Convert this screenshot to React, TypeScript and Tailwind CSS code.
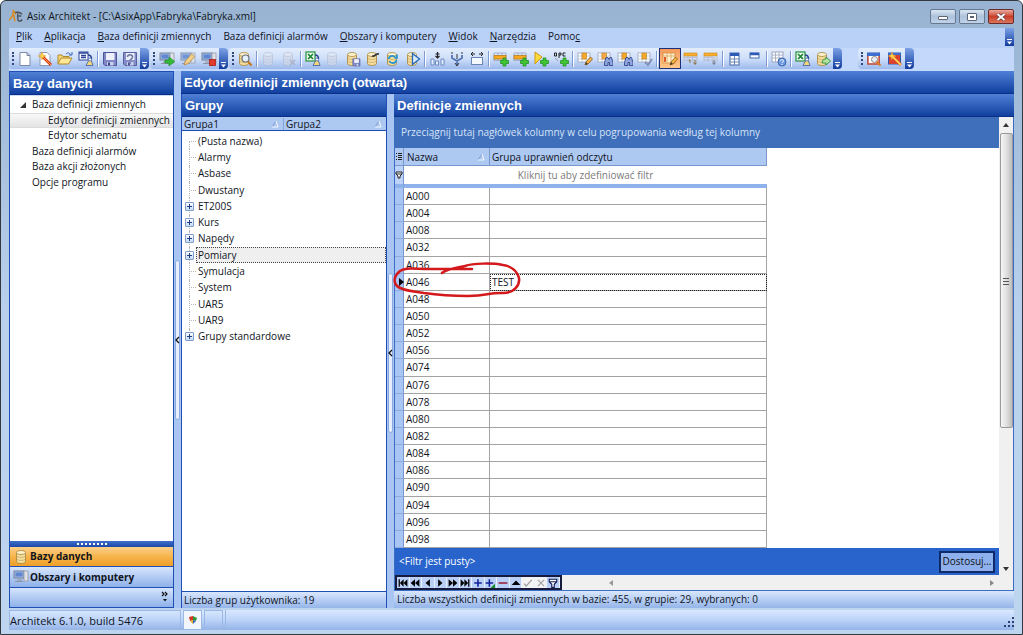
import React from 'react';
import clsx from 'clsx';

type IconProps = { children: React.ReactNode; className?: string };

const Icon = ({ children, className = 'size-4' }: IconProps) => (
  <svg viewBox="0 0 16 16" className={clsx('shrink-0', className)} aria-hidden="true">{children}</svg>
);

/* Shared icon parts */
const Cylinder = ({ fill = '#f3dc9c', line = '#a8853a', top = '#fdf3cf' }) => (
  <g fill={fill} stroke={line} strokeWidth=".8">
    <path d="M2.5 3.5v9c0 1.2 2 2 4.5 2s4.500-.8 4.500-2v-9z" />
    <ellipse cx="7" cy="3.500" rx="4.500" ry="2" fill={top} />
    <path d="M2.500 6.500c0 1.200 2 2 4.500 2s4.500-.8 4.500-2M2.500 9.500c0 1.200 2 2 4.500 2s4.500-.8 4.500-2" fill="none" opacity=".5" />
  </g>
);

const GreyCylinder = () => <g opacity=".6"><Cylinder fill="#d3d9e6" line="#a9b3c9" top="#e4e8f1" /></g>;

const Plus = () => <path d="M10 7h3v2.500h2.500v3h-2.500v2.500h-3v-2.500h-2.500v-3h2.500z" fill="#3fc433" stroke="#1d8a1a" strokeWidth=".7" />;

const Sheet = ({ header = '#f2a92c' }) => (
  <g>
    <rect x="1" y="2" width="12" height="9" fill="#fff" stroke="#9aa3bd" strokeWidth=".8" />
    <path d="M1 5h12M1 8h12M5 2v9M9 2v9" stroke="#b6bccd" strokeWidth=".8" />
    <rect x="5" y="2" width="4.500" height="6" fill={header} stroke="#c98116" strokeWidth=".6" />
  </g>
);

const Pencil = () => (
  <g>
    <path d="M8 14l1-3 4.500-5 2 2-4.500 5z" fill="#f7b545" stroke="#8a5a18" strokeWidth=".8" />
    <path d="M8 14l1-3 2 2z" fill="#4a3a28" />
  </g>
);

const Binoculars = () => (
  <path d="M7.500 14.500v-3l1.500-5h2l1 2 1-2h1.500l1.500 5v3h-3.500v-3h-1.500v3z" fill="#8fa5dd" stroke="#34468b" strokeWidth=".9" />
);

const RowArrow = () => (
  <g>
    <rect x="1" y="2" width="13" height="3" fill="#f7b02f" stroke="#c98116" strokeWidth=".6" />
    <path d="M1 6.500h13M1 9h13M1 5v6M5 5v6M9.500 5v6M14 5v6" stroke="#b0b7ca" strokeWidth=".8" />
  </g>
);

/* Grid with one highlighted row, used by the insert tools */
const MarkedRow = () => (
  <g>
    <path d="M1 2h12M1 5h12M1 9.500h12M1 2v8M5 2v8M9 2v8M13 2v8" stroke="#9aa6c4" strokeWidth=".8" />
    <rect x="1" y="4.500" width="12" height="3.500" fill="#f9a91c" stroke="#b87a15" strokeWidth=".7" />
  </g>
);

const Server = () => (
  <g>
    <rect x="1" y="2" width="10" height="7" fill="#9db8e8" stroke="#7b8397" />
    <rect x="2.500" y="3.500" width="7" height="4" fill="#5f86cf" />
    <path d="M4 11h5M2 12.500h8" stroke="#8d93a3" />
    <rect x="11" y="2" width="4" height="10" fill="#dfe1e6" stroke="#9499a5" strokeWidth=".8" />
  </g>
);

const Excel = () => (
  <g>
    <rect x="1" y="1" width="9" height="9" fill="#eefaee" stroke="#23903a" strokeWidth="1.200" />
    <path d="M3 3l5 5M8 3l-5 5" stroke="#178232" strokeWidth="1.700" />
  </g>
);

const Person = () => (
  <g>
    <path d="M10 4c3 0 3.500 1.500 3.500 4" fill="none" stroke="#25418f" strokeWidth="1.500" />
    <path d="M13 8.500l2 6h-7l2-4z" fill="#f3d776" stroke="#3d5aa8" strokeWidth=".8" />
    <circle cx="12" cy="8.500" r="1.500" fill="#fff" stroke="#3d5aa8" strokeWidth=".7" />
  </g>
);

const Floppy = () => (
  <g>
    <path d="M1.500 1.500h13v13h-11.500l-1.500-1.500z" fill="#7f86c6" stroke="#4c5396" />
    <rect x="4" y="2" width="8.500" height="7" fill="#edf0fb" />
    <rect x="5" y="11" width="6.500" height="3.500" fill="#c9cfea" />
    <rect x="6" y="11.500" width="2" height="3" fill="#3c4389" />
  </g>
);

const Calendar = () => (
  <g>
    <rect x="1.500" y="2" width="12" height="11" fill="#fff" stroke="#2e56ae" />
    <rect x="1.500" y="2" width="12" height="3" fill="#3c6fd0" />
  </g>
);

const Wand = () => (
  <g>
    <path d="M5 5l9 9" stroke="#d93718" strokeWidth="2.600" />
    <path d="M5 5l9 9" stroke="#f8a23c" strokeWidth="1" />
    <path d="M5 1l1 3 3 1-3 1-1 3-1-3-3-1 3-1z" fill="#ffd54a" stroke="#e0911b" strokeWidth=".5" />
  </g>
);

const fileTools = [
  { label: 'Nowy', icon: <path d="M3 1.500h7l3 3v10h-10zM10 1.500v3h3" fill="#fff" stroke="#7f8aa3" /> },
  { label: 'Kreator', icon: <g><path d="M3 1.500h7l3 3v10h-10z" fill="#fff" stroke="#8f98ad" /><Wand /></g> },
  { label: 'Otwórz', icon: <g><path d="M1 13v-9h4l1 1.500h6v2" fill="#f8d978" stroke="#b08a2a" /><path d="M1 13l3-6h11l-3.500 6z" fill="#ffe796" stroke="#b08a2a" /><path d="M9 3c2-2 4-1 4.500 1M12 4h3v-3" fill="none" stroke="#3865b8" /></g> },
  { label: 'Import', icon: <g><rect x="1" y="1" width="9" height="8" fill="#fff" stroke="#2a449b" /><path d="M1 2h9M3 4.500h5M3 6.500h5" stroke="#2a449b" strokeWidth="1.300" /><Person /></g> },
  'sep',
  { label: 'Zapisz', icon: <Floppy /> },
  { label: 'Zapisz jako', icon: <g opacity=".9"><Floppy /><path d="M5.500 6c0-3 5-3 5 0 0 2-2.500 2-2.500 3.500M8 11v2" fill="none" stroke="#666c92" strokeWidth="1.500" /></g> },
] as const;

const serverTools = [
  { label: 'Uruchom', icon: <g><Server /><path d="M6 9h4v-3l5.500 4.500-5.500 4.500v-3h-4z" fill="#36bd38" stroke="#178a20" strokeWidth=".7" /></g> },
  { label: 'Edytuj', icon: <g opacity=".85"><Server /><path d="M4 14l1.500-4 6-7 3 2.500-6 7z" fill="#f8cf78" stroke="#b6802a" strokeWidth=".8" /></g> },
  { label: 'Zatrzymaj', icon: <g><Server /><rect x="8.500" y="8.500" width="6" height="6" fill="#e33a2e" stroke="#a81d18" strokeWidth=".8" /></g> },
] as const;

const baseTools = [
  { label: 'Podgląd bazy', icon: <g><Cylinder /><circle cx="8.500" cy="7.500" r="3.500" fill="#e5f1ff" stroke="#6b6f7c" strokeWidth="1.200" /><path d="M11 10.500l3.500 4" stroke="#c8781c" strokeWidth="2" /></g> },
  'sep',
  { label: 'Baza', icon: <GreyCylinder /> },
  { label: 'Usuń bazę', icon: <g><GreyCylinder /><path d="M9 9l5 5M14 9l-5 5" stroke="#a9b3c9" strokeWidth="1.500" /></g> },
  'sep',
  { label: 'Import z Excela', icon: <g><Excel /><Person /></g> },
  { label: 'Sprawdź bazę', icon: <GreyCylinder /> },
  { label: 'Zapisz bazę', icon: <g><Cylinder /><g transform="translate(7 7) scale(.55)"><Floppy /></g></g> },
  { label: 'Modyfikuj bazę', icon: <g><Cylinder /><path d="M7 5c3 1 4-3 7-2" fill="none" stroke="#3a3a3a" strokeWidth="1.800" /></g> },
  { label: 'Odśwież bazę', icon: <g><Cylinder /><path d="M3.500 8c1-4 6-4 7-1h1.500v-3.500M11.500 9c-1 4-6 4-7 1" fill="none" stroke="#2597d1" strokeWidth="1.700" /></g> },
  { label: 'Generuj', icon: <g><Cylinder /><path d="M7.500 2.500l7 5.500-7 5.500z" fill="#d6ebff" stroke="#2467b8" strokeWidth="1.300" /></g> },
  'sep',
  { label: 'Wstaw', icon: <g><path d="M2 8h3v6h-3zM6.500 10h3v4h-3zM12 8h3v6h-3z" fill="#e6efff" stroke="#6c88c2" /><path d="M8.500 1v6M6.500 3h4M6.500 5l2 2 2-2" fill="none" stroke="#222" strokeWidth="1.200" /></g> },
  { label: 'Połącz', icon: <g><path d="M3 4v3l5 3 5-3v-3M8 9v5" fill="none" stroke="#5373b2" strokeWidth="1.800" /><path d="M8 3v5M3 1v2M13 1v2M6 12l2 3 2-3" fill="none" stroke="#333" /></g> },
  { label: 'Rozciągnij', icon: <g><rect x="2.500" y="6.500" width="11" height="7" fill="#f4f8ff" stroke="#6c85b5" /><path d="M2 3h4M10 3h4M4 1l-2 2 2 2M12 1l2 2-2 2" fill="none" stroke="#222" /></g> },
  'sep',
  { label: 'Dodaj wiersz', icon: <g><MarkedRow /><Plus /></g> },
  { label: 'Dodaj wiersze', icon: <g><MarkedRow /><Plus /></g> },
  { label: 'Dodaj zmienną', icon: <g><path d="M2 1l7 5-7 7z" fill="#ffd83b" stroke="#cf9a15" /><Plus /></g> },
  { label: 'Dodaj OPC', icon: <g><path d="M1.500 2h2v3h-2zM6 7v-5h2v2h-2M12.500 2h-2.500v3h2.500" fill="none" stroke="#222" /><path d="M2 7l3 3" stroke="#999" /><Plus /></g> },
  'sep',
  { label: 'Edytuj kolumnę', icon: <g><Sheet /><Pencil /></g> },
  { label: 'Szukaj', icon: <g><Sheet header="#f3a94c" /><Binoculars /></g> },
  { label: 'Szukaj dalej', icon: <g><Sheet /><Binoculars /></g> },
  { label: 'Zaznacz', icon: <g><Sheet /><path d="M8 11l3 3 4-6" fill="none" stroke="#8190b8" strokeWidth="2" /></g> },
  'sep',
  { label: 'Tryb edycji', active: true, icon: <g><rect x="1" y="2" width="12" height="10" fill="#fff0cf" stroke="#d08a3b" strokeWidth=".8" /><path d="M1 5h12M5 2v10M9 2v10" stroke="#d9a25c" strokeWidth=".8" /><path d="M3 6v5" stroke="#e04a1a" strokeWidth="1.800" /><Pencil /></g> },
  { label: 'Wiersz w dół', icon: <g><RowArrow /><path d="M6 9h1v3M12 9v4M10.500 11.500l1.500 2 1.500-2" fill="none" stroke="#8b6a37" /></g> },
  { label: 'Kolumna w dół', icon: <g><RowArrow /><rect x="9.500" y="5" width="4.500" height="4" fill="#c9cfdd" /><path d="M11 9v4M9.500 11.500l1.500 2 1.500-2" fill="none" stroke="#6e7381" /></g> },
  'sep',
  { label: 'Karta', icon: <g><rect x="3" y="2" width="9" height="12" fill="#fff" stroke="#4568ab" /><path d="M3 3.500h9" stroke="#2c5ab8" strokeWidth="3" /><path d="M3 8h9M3 11h9M7.500 5v9" stroke="#6b85b8" /></g> },
  { label: 'Pasek', icon: <g><rect x="3" y="2" width="9" height="5" fill="#fff" stroke="#4568ab" /><path d="M3 3h9" stroke="#2c5ab8" strokeWidth="2.500" /></g> },
  'sep',
  { label: 'Filtr', icon: <g><rect x="1" y="1" width="11" height="10" fill="#fff" stroke="#9aa3bd" /><path d="M1 4h11M1 7h11M4.500 1v10M8 1v10" stroke="#aab2c6" /><circle cx="11" cy="11" r="4" fill="#6f9be0" stroke="#3b65ae" /><path d="M9.500 10c0-2 3-2 3 0 0 1-1.500 1-1.500 2M11 13v1" fill="none" stroke="#fff" /></g> },
  'sep',
  { label: 'Eksport do Excela', icon: <g><Excel /><Person /></g> },
  { label: 'Eksport bazy', icon: <g><Cylinder /><path d="M7 12c0-3 2-4 4-4v-2l4.500 4-4.500 4v-2z" fill="#b4e2a4" stroke="#3d9440" /></g> },
] as const;

const viewTools = [
  { label: 'Wyszukaj', icon: <g><Calendar /><path d="M2 5v8h11v-8" fill="none" stroke="#dd5a3c" strokeWidth="1.500" /><circle cx="8.500" cy="8.500" r="3" fill="#e1efff" stroke="#9a8173" /><path d="M10.500 10.500l4 4" stroke="#d97823" strokeWidth="2" /></g> },
  { label: 'Konfiguruj', icon: <g><Calendar /><rect x="2" y="4" width="11" height="9" fill="#d9422e" /><Wand /><path d="M6 6l8 8" stroke="#ffd25c" strokeWidth="1.800" /></g> },
] as const;

type Tool = 'sep' | { label: string; icon: React.ReactNode; active?: boolean };

const MoreButton = ({ label }: { label: string }) => (
  <button aria-label={label} className="flex w-[9px] shrink-0 items-end justify-center bg-gradient-to-b from-[#7da2e6] to-[#123a9e] pb-px">
    <svg viewBox="0 0 7 7" className="size-[7px]" aria-hidden="true">
      <path d="M1 1.500h5" stroke="#fff" /><path d="M1 3.500h5l-2.500 3z" fill="#fff" />
    </svg>
  </button>
);

const Toolbar = ({ tools, className, label }: { tools: readonly Tool[]; className: string; label: string }) => (
  <div role="toolbar" aria-label={label} className={clsx('flex h-[21px] overflow-hidden rounded-sm bg-gradient-to-b from-[#e3edfd] via-[#cfdff9] to-[#9dbaec]', className)}>
    <span className="my-1 ml-[3px] w-[3px] shrink-0 border-l-2 border-dotted border-[#30477c]" />
    <div className="flex min-w-0 flex-1 items-center">
      {tools.map((tool, i) => tool === 'sep' ? (
        <span key={i} className="mx-px h-4 w-[2px] shrink-0 border-l border-r border-l-[#7c9bd4] border-r-white" />
      ) : (
        <button
          key={i}
          aria-label={tool.label}
          className={clsx('flex h-full min-w-0 flex-1 items-center justify-center', tool.active && 'border border-[#1c2e7a] bg-gradient-to-b from-[#f59a5c] to-[#ffc98a]')}
        >
          <Icon>{tool.icon}</Icon>
        </button>
      ))}
    </div>
    <MoreButton label={`${label}: więcej`} />
  </div>
);

const menu = [
  ['', 'P', 'lik'],
  ['', 'A', 'plikacja'],
  ['', 'B', 'aza definicji zmiennych'],
  ['Baza definicji alarmów', '', ''],
  ['', 'O', 'bszary i komputery'],
  ['', 'W', 'idok'],
  ['', 'N', 'arzędzia'],
  ['Pomo', 'c', ''],
];

const navigation = [
  { name: 'Baza definicji zmiennych', open: true },
  { name: 'Edytor definicji zmiennych', child: true, selected: true },
  { name: 'Edytor schematu', child: true },
  { name: 'Baza definicji alarmów' },
  { name: 'Baza akcji złożonych' },
  { name: 'Opcje programu' },
];

const groups = [
  { name: '(Pusta nazwa)' },
  { name: 'Alarmy' },
  { name: 'Asbase' },
  { name: 'Dwustany' },
  { name: 'ET200S', expandable: true },
  { name: 'Kurs', expandable: true },
  { name: 'Napędy', expandable: true },
  { name: 'Pomiary', expandable: true, selected: true },
  { name: 'Symulacja' },
  { name: 'System' },
  { name: 'UAR5' },
  { name: 'UAR9' },
  { name: 'Grupy standardowe', expandable: true },
];

const variables = [
  'A000', 'A004', 'A008', 'A032', 'A036', 'A046', 'A048', 'A050', 'A052', 'A056', 'A074',
  'A076', 'A078', 'A080', 'A082', 'A084', 'A086', 'A090', 'A094', 'A096', 'A098',
];

const TitleBar = () => (
  <header className="flex h-[27px] shrink-0 items-start justify-between">
    <div className="flex h-full items-center gap-1 pt-[3px]">
      <svg viewBox="0 0 16 16" className="size-[14px]" aria-hidden="true">
        <path d="M0 13l4-5 1-6 3 4M5 6l2 8" fill="none" stroke="#d8891f" strokeWidth="1.700" />
        <path d="M7 4c5-1 5 0 8 2M10 5v6c0 3 3 4 5 1M11 8h3" fill="none" stroke="#4a4f59" strokeWidth="1.600" />
      </svg>
      <h1>Asix Architekt - [C:\AsixApp\Fabryka\Fabryka.xml]</h1>
    </div>
    <div className="flex gap-[3px] pt-2">
      <button aria-label="Minimalizuj" className="flex h-[15px] w-[26px] items-end justify-center rounded-xs border border-[#65788f] bg-gradient-to-b from-[#dbe6f3] via-[#adc2dc] to-[#bfd2e8] pb-[3px]">
        <span className="h-1 w-[10px] rounded-[1px] border border-[#5d6472] bg-white" />
      </button>
      <button aria-label="Maksymalizuj" className="flex h-[15px] w-[26px] items-center justify-center rounded-xs border border-[#65788f] bg-gradient-to-b from-[#dbe6f3] via-[#adc2dc] to-[#bfd2e8]">
        <span className="flex h-2 w-[10px] items-center justify-center rounded-[1px] border border-[#5d6472] bg-white">
          <span className="h-[2px] w-1 bg-[#5d6472]" />
        </span>
      </button>
      <button aria-label="Zamknij" className="flex h-[15px] w-[26px] items-center justify-center rounded-xs border border-[#6b2a2c] bg-gradient-to-b from-[#e9a99d] via-[#c93f2b] to-[#d9745a]">
        <svg viewBox="0 0 10 8" className="h-2 w-[10px]" aria-hidden="true">
          <path d="M1.500 1l7 6M8.500 1l-7 6" stroke="#50343a" strokeWidth="3.200" />
          <path d="M1.500 1l7 6M8.500 1l-7 6" stroke="#fff" strokeWidth="2" />
        </svg>
      </button>
    </div>
  </header>
);

const PanelTitle = ({ children }: { children: React.ReactNode }) => (
  <h2 className="flex h-[23px] shrink-0 items-center border-b border-[#0b2f86] bg-gradient-to-b from-[#4f80d6] to-[#103f9f] pl-[3px] font-['Liberation_Sans',sans-serif] text-[13px] font-bold text-white">
    {children}
  </h2>
);

const Splitter = ({ className }: { className: string }) => (
  <div className={clsx('flex w-[7px] shrink-0 flex-col bg-[#a9c5f1]', className)}>
    <button aria-label="Zwiń panel" className="mx-px flex h-[160px] items-center justify-center rounded-sm border border-[#8ba9dc] bg-[#e6effd]">
      <svg viewBox="0 0 5 8" className="h-2 w-[5px] shrink-0" aria-hidden="true">
        <path d="M4 1l-3 3 3 3" fill="none" stroke="#111" strokeWidth="1.300" />
      </svg>
    </button>
  </div>
);

const SidePanel = () => (
  <aside className="flex w-[165px] shrink-0 flex-col border border-[#1f4fb5] bg-white">
    <PanelTitle>Bazy danych</PanelTitle>
    <nav className="flex-1 border-t border-[#c9daf5] pt-px">
      <ul className="grid h-[93px] auto-rows-fr">
        {navigation.map((item) => (
          <li key={item.name} className={clsx('flex min-h-0 items-center', item.selected && 'border-y border-[#dcdcdc] bg-gradient-to-b from-[#f8f8f8] to-[#e4e4e4]')}>
            <span className={clsx('shrink-0', item.child ? 'w-[38px]' : 'w-[22px]')}>
              {item.open && (
                <svg viewBox="0 0 6 6" className="ml-[10px] size-[6px]" aria-hidden="true"><path d="M6 0v6h-6z" fill="#333" /></svg>
              )}
            </span>
            <a href="#" className="whitespace-nowrap">{item.name}</a>
          </li>
        ))}
      </ul>
    </nav>
    <div className="flex h-[6px] shrink-0 items-center justify-center bg-gradient-to-b from-[#3e6fcb] to-[#1c48a6]">
      <span className="w-[30px] border-t-2 border-dotted border-white" />
    </div>
    <button className="flex h-5 shrink-0 items-center gap-px border-b border-[#1f4fb5] bg-gradient-to-b from-[#fbd08a] via-[#f6b44a] to-[#ee9f28] pl-[3px] font-bold">
      <Icon><g transform="translate(1 0)"><Cylinder /></g></Icon>
      Bazy danych
    </button>
    <button className="flex h-[21px] shrink-0 items-center gap-px border-b border-[#1f4fb5] bg-gradient-to-b from-[#d6e5fc] to-[#8fb1ea] pl-[3px] font-bold">
      <Icon><Server /></Icon>
      Obszary i komputery
    </button>
    <div className="flex h-[19px] shrink-0 justify-end bg-gradient-to-b from-[#d6e5fc] to-[#8fb1ea] pt-[3px] pr-1">
      <button aria-label="Konfiguruj przyciski" className="h-3">
        <svg viewBox="0 0 8 12" className="h-3 w-2" aria-hidden="true">
          <path d="M1 1l2 2-2 2M4 1l2 2-2 2" fill="none" stroke="#111" strokeWidth="1.200" /><path d="M2 8h4l-2 2.500z" fill="#111" />
        </svg>
      </button>
    </div>
  </aside>
);

const SortMark = () => (
  <svg viewBox="0 0 8 8" className="size-2 shrink-0" aria-hidden="true">
    <path d="M1 7l4-6" fill="none" stroke="#7f9bcd" /><path d="M5 1l2 6h-6" fill="none" stroke="#f4f8ff" />
  </svg>
);

const GroupsPanel = () => (
  <section className="flex w-[206px] shrink-0 flex-col border-x border-[#1f4fb5] bg-white">
    <PanelTitle>Grupy</PanelTitle>
    <div className="flex h-[14px] shrink-0 overflow-hidden border-b border-[#1f4fb5] bg-[#adc8f1] pt-px">
      <div className="flex w-[102px] items-center justify-between border-r border-[#86a5dc] pr-1 pl-[2px]"><span>Grupa1</span><SortMark /></div>
      <div className="flex flex-1 items-center justify-between pr-1 pl-[2px]"><span>Grupa2</span><SortMark /></div>
    </div>
    <ul className="grid h-[214px] shrink-0 auto-rows-fr pt-[2px]">
      {groups.map((group, i) => (
        <li key={group.name} className="flex min-h-0">
          <span className="relative flex w-[14px] shrink-0 items-center justify-center">
            <span className={clsx('absolute left-[7px] border-l border-dotted border-[#b5b5b5]', i === 0 ? 'top-1/2 bottom-0' : i === groups.length - 1 ? 'top-0 bottom-1/2' : 'inset-y-0')} />
            {group.expandable ? (
              <button aria-label={`Rozwiń ${group.name}`} className="relative flex size-[9px] items-center justify-center rounded-[1px] border border-[#7f9cc9] bg-gradient-to-b from-white to-[#c7d9f5]">
                <svg viewBox="0 0 5 5" className="size-[5px]" aria-hidden="true"><path d="M0 2.500h5M2.500 0v5" stroke="#1d3f86" /></svg>
              </button>
            ) : (
              <span className="ml-[9px] w-[6px] border-t border-dotted border-[#b5b5b5]" />
            )}
          </span>
          <span className={clsx('flex flex-1 items-center border border-dotted pl-px', group.selected ? 'border-[#444] bg-[#efefef]' : 'border-transparent')}>{group.name}</span>
        </li>
      ))}
    </ul>
    <div className="flex-1" />
    <div className="flex h-[17px] shrink-0 items-center border-t border-[#1f4fb5] bg-gradient-to-b from-[#d9e7fd] to-[#95b5ea] pl-[2px]">Liczba grup użytkownika: 19</div>
  </section>
);

/* Hand-drawn ring round the marked row */
const Ring = () => (
  <svg viewBox="0 0 130 36" className="pointer-events-none absolute -top-[12px] -left-[2px] z-10 h-9 w-[130px]" fill="none" stroke="#d3191b" strokeWidth="2.500" strokeLinecap="round" aria-hidden="true">
    <path d="M79 7H38C20 7 13 5 7 9C1 14 0 20 4 24C9 29 20 29 31 31C45 33 55 34 75 34C95 34 93 31 108 31C122 32 127 22 126 16C124 9 118 4 110 3C100 1 80 1 72 4C62 6 53 7 49 11" />
  </svg>
);

const VariablesTable = () => (
  <table className="h-[400px] w-[372px] shrink-0 table-fixed border-separate border-spacing-0 text-left">
    <colgroup><col className="w-[9px]" /><col className="w-[86px]" /><col /></colgroup>
    <thead>
      <tr className="h-[18px] bg-[#adc8f1]">
        <th className="border-r border-b border-[#7897cf] p-0" aria-label="Kolumny">
          <svg viewBox="0 0 8 8" className="size-2" aria-hidden="true"><path d="M3 .5h4M3 2.500h4M3 4.500h4M3 6.500h4M1 .5h1M1 3.500h1M1 6.500h1" stroke="#222" /></svg>
        </th>
        <th className="border-r border-b border-[#7897cf] p-0 font-normal">
          <div className="flex items-center justify-between pt-px pr-1 pl-[3px]">Nazwa<SortMark /></div>
        </th>
        <th className="border-r border-b border-[#7897cf] p-0 pt-px pl-[2px] font-normal">Grupa uprawnień odczytu</th>
      </tr>
      <tr className="h-[22px]">
        <td className="border-r border-b-4 border-r-[#7897cf] border-b-[#8fb2ec] bg-[#bcd2f6] p-0">
          <svg viewBox="0 0 8 8" className="size-2" aria-hidden="true"><path d="M1 1h6v2l-2 2v2h-2v-2l-2-2zM1 3h6" fill="#fff" stroke="#222" /></svg>
        </td>
        <td colSpan={2} className="border-b-4 border-[#8fb2ec] p-0 text-center text-[#7a7a7a]">
          <button className="block w-full leading-[14px]">Kliknij tu aby zdefiniować filtr</button>
        </td>
      </tr>
    </thead>
    <tbody>
      {variables.map((name) => {
        const marked = name === 'A046';
        return (
          <tr key={name}>
            <td className="relative border-r border-b border-r-[#7897cf] border-b-[#8fabdd] bg-[#a9c5f3] p-0">
              {marked && <Ring />}
              {marked && <svg viewBox="0 0 5 8" className="ml-1 h-2 w-[5px]" aria-hidden="true"><path d="M0 0l5 4-5 4z" fill="#000" /></svg>}
            </td>
            <td className="border-r border-b border-[#a3a3a3] p-0 pt-px pl-[2px]">{name}</td>
            <td className={clsx('border-r border-b border-[#a3a3a3] p-0 pt-px pl-[2px]', marked && 'outline-1 -outline-offset-1 outline-dotted outline-[#222]')}>{marked && 'TEST'}</td>
          </tr>
        );
      })}
    </tbody>
  </table>
);

const navigator = [
  { label: 'Pierwszy', icon: <path d="M1 2h2v12h-2zM9 2v12l-6-6zM15 2v12l-6-6z" /> },
  { label: 'Poprzednia strona', icon: <path d="M8 2v12l-7-6zM15 2v12l-7-6z" /> },
  { label: 'Poprzedni', icon: <path d="M11 2v12l-7-6z" /> },
  { label: 'Następny', icon: <path d="M5 2v12l7-6z" /> },
  { label: 'Następna strona', icon: <path d="M1 2v12l7-6zM8 2v12l7-6z" /> },
  { label: 'Ostatni', icon: <path d="M1 2v12l6-6zM7 2v12l6-6zM13 2h2v12h-2z" /> },
  { label: 'Dodaj', icon: <path d="M8 2v12M2 8h12" stroke="#10219b" strokeWidth="2.500" /> },
  { label: 'Dodaj na końcu', icon: <g><path d="M7 2v12M1 8h12" stroke="#10219b" strokeWidth="2.500" /><path d="M16 9v7h-7z" fill="#138a23" /></g> },
  { label: 'Usuń', icon: <path d="M1 8h14" stroke="#9c2035" strokeWidth="2.500" /> },
  { label: 'Edytuj', icon: <path d="M1 11l7-7 7 7z" /> },
  { label: 'Zatwierdź', off: true, icon: <path d="M2 9l3 4 9-10" fill="none" stroke="#9a9a9a" strokeWidth="2" /> },
  { label: 'Anuluj', off: true, icon: <path d="M3 3l10 10M13 3l-10 10" stroke="#a5a5a5" strokeWidth="2" /> },
  { label: 'Filtruj', icon: <path d="M2 2h12v4l-4 4v5h-4v-5l-4-4zM2 6h12" fill="#fff" stroke="#111b55" strokeWidth="1.800" /> },
];

const Definitions = () => (
  <section className="flex min-w-0 flex-1 flex-col">
    <PanelTitle>Definicje zmiennych</PanelTitle>
    <div className="flex min-h-0 flex-1 border-x border-b border-[#3d6cc4] bg-white">
      <div className="flex min-w-0 flex-1 flex-col">
        <p className="flex h-[31px] shrink-0 items-center bg-[#3f6fbb] pl-[6px] text-[#d6e3f8]">
          Przeciągnij tutaj nagłówek kolumny w celu pogrupowania według tej kolumny
        </p>
        <VariablesTable />
        <div className="flex h-[27px] shrink-0 items-center justify-between bg-[#2864cb] pr-1 pl-1 text-white">
          &lt;Filtr jest pusty&gt;
          <button className="h-[22px] w-[56px] border-2 border-[#0f2a66] bg-[#8eb0ec] text-[#111]">Dostosuj...</button>
        </div>
        <div className="flex h-[15px] shrink-0 bg-[#f0f0f0]">
          <div className="flex w-[167px] items-center border-2 border-[#141b3d] bg-[#e9f0fc]">
            {navigator.map((item) => (
              <button key={item.label} aria-label={item.label} disabled={item.off} className={clsx('mr-px flex h-full min-w-0 flex-1 items-center justify-center', item.off ? 'bg-[#f3f3f3]' : 'bg-[#b9cff5]')}>
                <Icon className="size-[10px]">{item.icon}</Icon>
              </button>
            ))}
          </div>
          <div className="flex flex-1 items-center justify-between pr-[5px] pl-[47px]">
            <svg viewBox="0 0 4 6" className="h-[6px] w-1" aria-hidden="true"><path d="M4 0v6l-4-3z" fill="#999" /></svg>
            <svg viewBox="0 0 4 6" className="h-[6px] w-1" aria-hidden="true"><path d="M0 0v6l4-3z" fill="#888" /></svg>
          </div>
        </div>
      </div>
      <div className="flex w-[14px] shrink-0 flex-col items-center bg-[#f0f0f0]">
        <svg viewBox="0 0 6 4" className="my-[6px] h-1 w-[6px] shrink-0" aria-hidden="true"><path d="M3 0l3 4h-6z" fill="#333" /></svg>
        <div className="flex h-[295px] w-[13px] shrink-0 items-center justify-center rounded-xs border border-[#9a9a9a] bg-gradient-to-r from-[#f6f6f6] via-[#e0e0e0] to-[#bdbdbd]">
          <svg viewBox="0 0 6 8" className="h-2 w-[6px]" aria-hidden="true"><path d="M0 1.500h6M0 4.500h6M0 7.500h6" stroke="#555" /></svg>
        </div>
        <div className="flex-1" />
        <svg viewBox="0 0 6 4" className="mb-[19px] h-1 w-[6px] shrink-0" aria-hidden="true"><path d="M3 4l3-4h-6z" fill="#333" /></svg>
      </div>
    </div>
    <div className="flex h-[17px] shrink-0 items-center bg-gradient-to-b from-[#d9e7fd] to-[#95b5ea] pl-[3px]">
      Liczba wszystkich definicji zmiennych w bazie: 455, w grupie: 29, wybranych: 0
    </div>
  </section>
);

const StatusBar = () => (
  <footer className="mt-[2px] flex h-5 shrink-0 items-stretch gap-[2px] bg-gradient-to-b from-[#d9e8fe] via-[#bcd3f8] to-[#94b3e8]">
    <span className="flex w-[172px] items-center border border-[#9bb7e4] text-[11px]">Architekt 6.1.0, build 5476</span>
    <span className="flex w-[19px] items-center justify-center border border-[#9bb7e4] bg-[#f0f5fe]">
      <svg viewBox="0 0 10 10" className="size-[10px]" aria-hidden="true">
        <path d="M1 2l4-1v4l-3 1z" fill="#d53524" /><path d="M5 1l4 2-1 3-3-1z" fill="#2f9a37" /><path d="M2 6l3-1v4z" fill="#e7b31f" /><path d="M5 5l3 1-3 3z" fill="#315fc4" />
      </svg>
    </span>
    <span className="w-[19px] border border-[#9bb7e4]" />
    <span className="flex flex-1 items-end justify-end border-l border-[#9bb7e4] pb-[3px]">
      <svg viewBox="0 0 10 10" className="size-[10px]" aria-hidden="true">
        <path d="M8 0h2v2h-2zM8 4h2v2h-2zM8 8h2v2h-2zM4 4h2v2h-2zM4 8h2v2h-2zM0 8h2v2h-2z" fill="#2b4174" />
      </svg>
    </span>
  </footer>
);

export default function App() {
  return (
    <div className="flex h-screen flex-col overflow-hidden rounded-t-md border border-[#33383f] bg-gradient-to-b from-[#97b3d1] via-[#b9d1ec] to-[#bdd5ee] px-2 pb-1 font-['Open_Sans',sans-serif] text-[10px] leading-[13px] text-[#10141c]">
      <TitleBar />
      <nav className="flex h-5 shrink-0 items-start justify-between bg-[#b9d0f7]">
        <ul className="flex gap-3 pt-[2px] pl-[7px]">
          {menu.map(([before, key, after]) => (
            <li key={before + key + after}>
              <a href="#">{before}<u>{key}</u>{after}</a>
            </li>
          ))}
        </ul>
        <div className="flex h-[18px]"><MoreButton label="Menu: więcej" /></div>
      </nav>
      <div className="flex h-[23px] shrink-0 items-start bg-[#c3d8fa]">
        <Toolbar label="Plik" tools={fileTools} className="w-[140px]" />
        <Toolbar label="Serwer" tools={serverTools} className="ml-px w-[78px]" />
        <Toolbar label="Baza" tools={baseTools} className="ml-px w-[613px]" />
        <Toolbar label="Widok" tools={viewTools} className="ml-4 w-[56px]" />
      </div>
      <main className="flex min-h-0 flex-1 bg-[#a9c5f1]">
        <SidePanel />
        <Splitter className="pt-[189px]" />
        <div className="flex min-w-0 flex-1 flex-col">
          <PanelTitle>Edytor definicji zmiennych (otwarta)</PanelTitle>
          <div className="flex min-h-0 flex-1">
            <GroupsPanel />
            <Splitter className="pt-[179px]" />
            <Definitions />
          </div>
        </div>
      </main>
      <StatusBar />
    </div>
  );
}
